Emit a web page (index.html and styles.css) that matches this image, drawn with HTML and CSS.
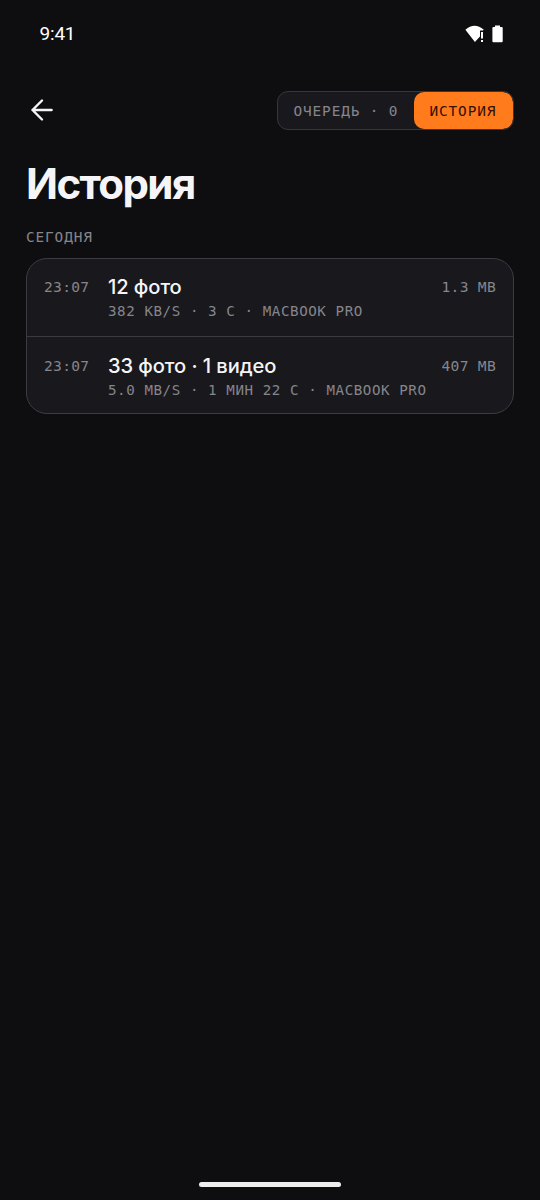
FILE: index.html
```html
<!DOCTYPE html>
<html lang="ru">
<head>
<meta charset="utf-8">
<title>История</title>
<link rel="stylesheet" href="styles.css">
</head>
<body>
<div class="screen">
  <header class="status">
    <span class="clock">9:41</span>
    <svg class="status-icons" width="40" height="20" viewBox="0 0 40 20" fill="#fff">
      <path d="M.4 5.7Q9.5 -2.3 18.8 5.7L17.9 6.6H15V12.4L9.9 18Z"/>
      <path d="M16 8h2v6.5h-2zM16 16h2v2h-2z"/>
      <path d="M30 1.5h5v1.6h1.7q1 0 1 1v13.2q0 1-1 1h-8.3q-1 0-1-1V4.1q0-1 1-1H30z"/>
    </svg>
  </header>
  <nav class="topbar">
    <svg class="back" width="24" height="24" viewBox="0 0 24 24" fill="none" stroke="#f5f5f7" stroke-width="2.4" stroke-linecap="round" stroke-linejoin="round">
      <path d="M21.6 12H2.5M12 2.5L2.5 12L12 21.5"/>
    </svg>
    <div class="tabs">
      <span class="tab">ОЧЕРЕДЬ · 0</span>
      <span class="tab active">ИСТОРИЯ</span>
    </div>
  </nav>
  <main>
    <h1 class="title">История</h1>
    <h2 class="section">СЕГОДНЯ</h2>
    <div class="card">
      <div class="row">
        <span class="time">23:07</span>
        <div class="info">
          <div class="name">12 фото</div>
          <div class="meta">382 KB/S · 3 С · MACBOOK PRO</div>
        </div>
        <span class="size">1.3 MB</span>
      </div>
      <div class="row">
        <span class="time">23:07</span>
        <div class="info">
          <div class="name">33 фото · 1 видео</div>
          <div class="meta">5.0 MB/S · 1 МИН 22 С · MACBOOK PRO</div>
        </div>
        <span class="size">407 MB</span>
      </div>
    </div>
  </main>
  <div class="home"></div>
</div>
</body>
</html>
```
FILE: styles.css
```css
* { box-sizing: border-box; }
body { margin: 0; background: #0e0e10; color: #f5f5f7; font-family: Inter, sans-serif; }
.screen { width: 540px; height: 1200px; display: flex; flex-direction: column; }
.status { height: 68px; padding: 0 35px 0 39.5px; display: flex; align-items: center; justify-content: space-between; }
.clock { font: 400 19px/20px Roboto, sans-serif; letter-spacing: -0.2px; color: #fff; }
.topbar { height: 39px; margin: 22.5px 26.5px 0 29.5px; display: flex; align-items: center; justify-content: space-between; }
.tabs { height: 39px; width: 237px; display: flex; border: 1px solid #36363c; border-radius: 11px; background: #19191d; overflow: hidden; }
.tab { padding-left: 16px; width: 136.5px; font: 400 14.4px/38px "DejaVu Sans Mono", monospace; letter-spacing: .87px; color: #85858c; white-space: pre; }
.tab.active { padding-left: 15.5px; width: 98.5px; color: #351004; background: #ff7b1c; border-radius: 10px; }
main { padding: 0 26px; flex: 1; }
.title { margin: 29.5px 0 0; font-size: 42px; line-height: 50px; font-weight: 700; letter-spacing: -1.6px; }
.section { margin: 18px 0 0; font: 400 14.4px/20px "DejaVu Sans Mono", monospace; letter-spacing: .87px; color: #85858c; }
.card { margin-top: 11px; border: 1px solid #3b3b41; border-radius: 21px; background: #19191d; overflow: hidden; }
.row { height: 76.5px; padding: 15px 17px 0 17px; display: flex; }
.row + .row { border-top: 1px solid #3b3b41; padding-top: 16px; height: 77.5px; }
.time, .size { font: 400 14.6px/26px "DejaVu Sans Mono", monospace; letter-spacing: .3px; color: #85858c; }
.time { width: 64px; }
.info { flex: 1; }
.name { font-size: 20.1px; line-height: 26px; font-weight: 500; letter-spacing: -.07px; }
.meta { font: 400 14.2px/23px "DejaVu Sans Mono", monospace; letter-spacing: .56px; color: #85858c; white-space: pre; }
.home { width: 142px; height: 5px; margin: 0 auto 13px; border-radius: 3px; background: #ededed; }
```
